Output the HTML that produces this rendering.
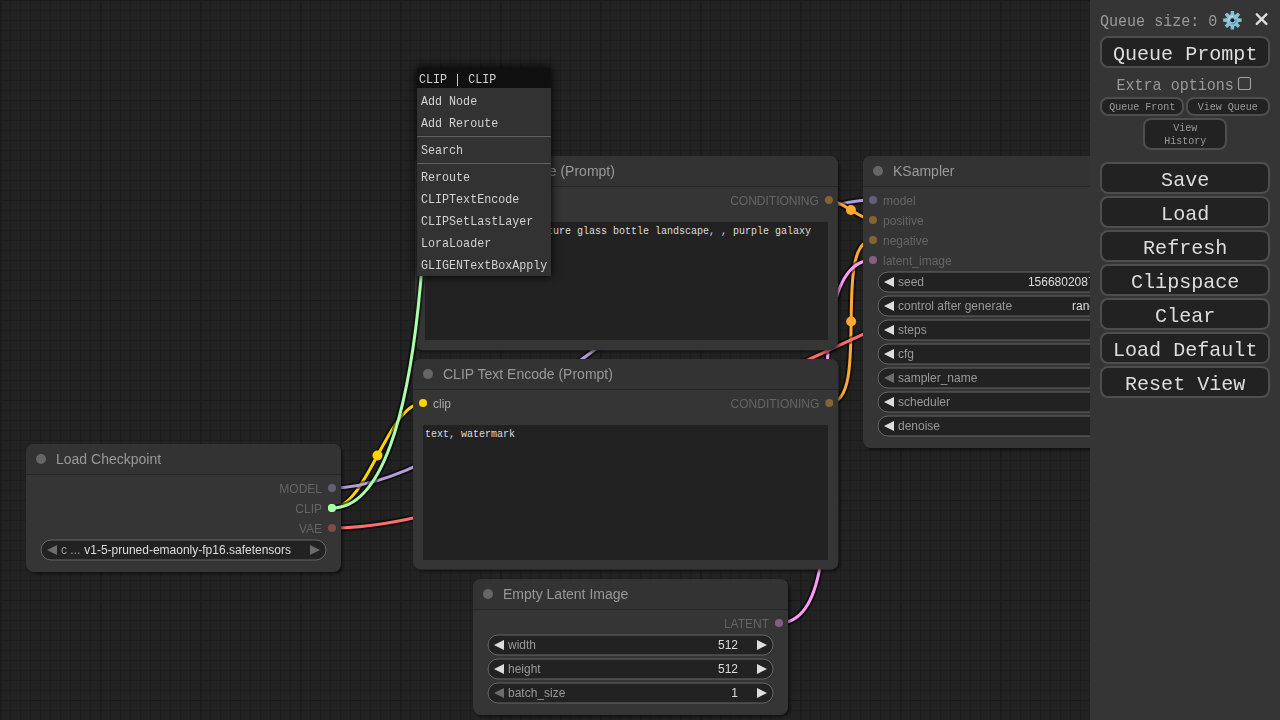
<!DOCTYPE html>
<html><head><meta charset="utf-8"><style>
html,body{margin:0;padding:0;width:1280px;height:720px;overflow:hidden;background:#222;}
#c{position:absolute;left:0;top:0;}
.ta{position:absolute;background:#222;color:#ddd;font-family:"Liberation Mono",monospace;font-size:10px;line-height:12px;padding:0;box-sizing:border-box;padding:4px 2px 2px 2px;white-space:pre;overflow:hidden}
#o{position:absolute;left:0;top:0;}
</style></head><body>

<svg id="c" style="will-change:transform" width="1280" height="720" viewBox="0 0 1280 720">
<defs>
<pattern id="grid" x="0" y="0" width="100" height="100" patternUnits="userSpaceOnUse">
<rect width="100" height="100" fill="#222222"/>
<path d="M10 0V100M20 0V100M30 0V100M40 0V100M50 0V100M60 0V100M70 0V100M80 0V100M90 0V100M0 10H100M0 20H100M0 30H100M0 40H100M0 50H100M0 60H100M0 70H100M0 80H100M0 90H100" stroke="#1d1d1d" stroke-width="1" transform="translate(0.5 0.5)"/>
<rect x="0" y="0" width="100" height="1" fill="#1a1a1a"/>
<rect x="0" y="0" width="2" height="100" fill="#1b1b1b"/>
</pattern>
<filter id="sh" x="-10%" y="-10%" width="120%" height="120%"><feDropShadow dx="2" dy="2" stdDeviation="1.5" flood-color="#000" flood-opacity="0.5"/></filter>
<filter id="msh" x="-30%" y="-30%" width="160%" height="160%"><feDropShadow dx="0" dy="0" stdDeviation="5" flood-color="#000" flood-opacity="1"/></filter>
</defs>
<rect width="1280" height="720" fill="url(#grid)"/>
<path d="M332 508C366.74 508 388.26 403 423 403" fill="none" stroke="rgba(0,0,0,0.5)" stroke-width="7"/><path d="M332 508C366.74 508 388.26 403 423 403" fill="none" stroke="#FFD500" stroke-width="3"/><circle cx="377.5" cy="455.5" r="5" fill="#FFD500"/>
<path d="M332 488C485.22 488 719.78 200 873 200" fill="none" stroke="rgba(0,0,0,0.5)" stroke-width="7"/><path d="M332 488C485.22 488 719.78 200 873 200" fill="none" stroke="#B39DDB" stroke-width="3"/><circle cx="602.5" cy="344" r="5" fill="#B39DDB"/>
<path d="M828.85 200C840.97 200 860.88 220 873 220" fill="none" stroke="rgba(0,0,0,0.5)" stroke-width="7"/><path d="M828.85 200C840.97 200 860.88 220 873 220" fill="none" stroke="#FFA931" stroke-width="3"/><circle cx="850.92" cy="210" r="5" fill="#FFA931"/>
<path d="M829.28 403C871.47 403 830.81 240 873 240" fill="none" stroke="rgba(0,0,0,0.5)" stroke-width="7"/><path d="M829.28 403C871.47 403 830.81 240 873 240" fill="none" stroke="#FFA931" stroke-width="3"/><circle cx="851.14" cy="321.5" r="5" fill="#FFA931"/>
<path d="M779 623C872.74 623 779.26 260 873 260" fill="none" stroke="rgba(0,0,0,0.5)" stroke-width="7"/><path d="M779 623C872.74 623 779.26 260 873 260" fill="none" stroke="#FF9CF9" stroke-width="3"/><circle cx="826" cy="441.5" r="5" fill="#FF9CF9"/>
<path d="M332 528C566.57 528 984.43 222 1219 222" fill="none" stroke="rgba(0,0,0,0.5)" stroke-width="7"/><path d="M332 528C566.57 528 984.43 222 1219 222" fill="none" stroke="#FF6E6E" stroke-width="3"/><circle cx="775.5" cy="375" r="5" fill="#FF6E6E"/>
<path filter="url(#sh)" d="M34 444H333A8 8 0 0 1 341 452V564A8 8 0 0 1 333 572H34A8 8 0 0 1 26 564V452A8 8 0 0 1 34 444Z" fill="#353535"/>
<path d="M34 444H333A8 8 0 0 1 341 452V474H26V452A8 8 0 0 1 34 444Z" fill="#333333"/>
<rect x="26" y="474" width="315" height="1" fill="rgba(0,0,0,0.25)"/>
<circle cx="41" cy="459" r="5" fill="#666"/>
<text x="56" y="464" font-size="14" fill="#999" font-family="Liberation Sans, sans-serif">Load Checkpoint</text>
<g opacity="0.4"><circle cx="332" cy="488" r="4" fill="#B39DDB"/></g><text opacity="0.4" x="322" y="493" text-anchor="end" font-size="12" fill="#AAA" font-family="Liberation Sans, sans-serif">MODEL</text>
<g><circle cx="332" cy="508" r="4" fill="#AAFFAA"/></g><text opacity="0.4" x="322" y="513" text-anchor="end" font-size="12" fill="#AAA" font-family="Liberation Sans, sans-serif">CLIP</text>
<g opacity="0.4"><circle cx="332" cy="528" r="4" fill="#FF6E6E"/></g><text opacity="0.4" x="322" y="533" text-anchor="end" font-size="12" fill="#AAA" font-family="Liberation Sans, sans-serif">VAE</text>
<rect x="41" y="540" width="285" height="20" rx="10" ry="10" fill="#222" stroke="#666" stroke-width="1"/>
<path d="M57 545L47 550L57 555Z" fill="#DDD" fill-opacity="0.4"/>
<path d="M310 545L320 550L310 555Z" fill="#DDD" fill-opacity="0.4"/>
<text x="61" y="554" font-size="12" fill="#999" font-family="Liberation Sans, sans-serif">c ...</text>
<text x="291" y="554" text-anchor="end" font-size="12" fill="#DDD" font-family="Liberation Sans, sans-serif">v1-5-pruned-emaonly-fp16.safetensors</text>
<path filter="url(#sh)" d="M423 156H829.85A8 8 0 0 1 837.85 164V342.31A8 8 0 0 1 829.85 350.31H423A8 8 0 0 1 415 342.31V164A8 8 0 0 1 423 156Z" fill="#353535"/>
<path d="M423 156H829.85A8 8 0 0 1 837.85 164V186H415V164A8 8 0 0 1 423 156Z" fill="#333333"/>
<rect x="415" y="186" width="422.85" height="1" fill="rgba(0,0,0,0.25)"/>
<circle cx="430" cy="171" r="5" fill="#666"/>
<text x="445" y="176" font-size="14" fill="#999" font-family="Liberation Sans, sans-serif">CLIP Text Encode (Prompt)</text>
<g><circle cx="425" cy="200" r="4" fill="#FFD500"/><text x="435" y="205" font-size="12" fill="#AAA" font-family="Liberation Sans, sans-serif">clip</text></g>
<g opacity="0.4"><circle cx="828.85" cy="200" r="4" fill="#FFA931"/></g><text opacity="0.4" x="818.85" y="205" text-anchor="end" font-size="12" fill="#AAA" font-family="Liberation Sans, sans-serif">CONDITIONING</text>
<path filter="url(#sh)" d="M421 359H830.28A8 8 0 0 1 838.28 367V561.61A8 8 0 0 1 830.28 569.61H421A8 8 0 0 1 413 561.61V367A8 8 0 0 1 421 359Z" fill="#353535"/>
<path d="M421 359H830.28A8 8 0 0 1 838.28 367V389H413V367A8 8 0 0 1 421 359Z" fill="#333333"/>
<rect x="413" y="389" width="425.28" height="1" fill="rgba(0,0,0,0.25)"/>
<circle cx="428" cy="374" r="5" fill="#666"/>
<text x="443" y="379" font-size="14" fill="#999" font-family="Liberation Sans, sans-serif">CLIP Text Encode (Prompt)</text>
<g><circle cx="423" cy="403" r="4" fill="#FFD500"/><text x="433" y="408" font-size="12" fill="#AAA" font-family="Liberation Sans, sans-serif">clip</text></g>
<g opacity="0.4"><circle cx="829.28" cy="403" r="4" fill="#FFA931"/></g><text opacity="0.4" x="819.28" y="408" text-anchor="end" font-size="12" fill="#AAA" font-family="Liberation Sans, sans-serif">CONDITIONING</text>
<path filter="url(#sh)" d="M871 156H1170A8 8 0 0 1 1178 164V440A8 8 0 0 1 1170 448H871A8 8 0 0 1 863 440V164A8 8 0 0 1 871 156Z" fill="#353535"/>
<path d="M871 156H1170A8 8 0 0 1 1178 164V186H863V164A8 8 0 0 1 871 156Z" fill="#333333"/>
<rect x="863" y="186" width="315" height="1" fill="rgba(0,0,0,0.25)"/>
<circle cx="878" cy="171" r="5" fill="#666"/>
<text x="893" y="176" font-size="14" fill="#999" font-family="Liberation Sans, sans-serif">KSampler</text>
<g opacity="0.4"><circle cx="873" cy="200" r="4" fill="#B39DDB"/><text x="883" y="205" font-size="12" fill="#AAA" font-family="Liberation Sans, sans-serif">model</text></g>
<g opacity="0.4"><circle cx="873" cy="220" r="4" fill="#FFA931"/><text x="883" y="225" font-size="12" fill="#AAA" font-family="Liberation Sans, sans-serif">positive</text></g>
<g opacity="0.4"><circle cx="873" cy="240" r="4" fill="#FFA931"/><text x="883" y="245" font-size="12" fill="#AAA" font-family="Liberation Sans, sans-serif">negative</text></g>
<g opacity="0.4"><circle cx="873" cy="260" r="4" fill="#FF9CF9"/><text x="883" y="265" font-size="12" fill="#AAA" font-family="Liberation Sans, sans-serif">latent_image</text></g>
<g opacity="0.4"><circle cx="1169" cy="200" r="4" fill="#FF9CF9"/></g><text opacity="0.4" x="1159" y="205" text-anchor="end" font-size="12" fill="#AAA" font-family="Liberation Sans, sans-serif">LATENT</text>
<rect x="878" y="272" width="285" height="20" rx="10" ry="10" fill="#222" stroke="#666" stroke-width="1"/>
<path d="M894 277L884 282L894 287Z" fill="#DDD"/>
<path d="M1147 277L1157 282L1147 287Z" fill="#DDD"/>
<text x="898" y="286" font-size="12" fill="#999" font-family="Liberation Sans, sans-serif">seed</text>
<text x="1128" y="286" text-anchor="end" font-size="12" fill="#DDD" font-family="Liberation Sans, sans-serif">156680208700286</text>
<rect x="878" y="296" width="285" height="20" rx="10" ry="10" fill="#222" stroke="#666" stroke-width="1"/>
<path d="M894 301L884 306L894 311Z" fill="#DDD"/>
<path d="M1147 301L1157 306L1147 311Z" fill="#DDD"/>
<text x="898" y="310" font-size="12" fill="#999" font-family="Liberation Sans, sans-serif">control after generate</text>
<text x="1128" y="310" text-anchor="end" font-size="12" fill="#DDD" font-family="Liberation Sans, sans-serif">randomize</text>
<rect x="878" y="320" width="285" height="20" rx="10" ry="10" fill="#222" stroke="#666" stroke-width="1"/>
<path d="M894 325L884 330L894 335Z" fill="#DDD"/>
<path d="M1147 325L1157 330L1147 335Z" fill="#DDD"/>
<text x="898" y="334" font-size="12" fill="#999" font-family="Liberation Sans, sans-serif">steps</text>
<text x="1128" y="334" text-anchor="end" font-size="12" fill="#DDD" font-family="Liberation Sans, sans-serif">20</text>
<rect x="878" y="344" width="285" height="20" rx="10" ry="10" fill="#222" stroke="#666" stroke-width="1"/>
<path d="M894 349L884 354L894 359Z" fill="#DDD"/>
<path d="M1147 349L1157 354L1147 359Z" fill="#DDD"/>
<text x="898" y="358" font-size="12" fill="#999" font-family="Liberation Sans, sans-serif">cfg</text>
<text x="1128" y="358" text-anchor="end" font-size="12" fill="#DDD" font-family="Liberation Sans, sans-serif">8.0</text>
<rect x="878" y="368" width="285" height="20" rx="10" ry="10" fill="#222" stroke="#666" stroke-width="1"/>
<path d="M894 373L884 378L894 383Z" fill="#DDD" fill-opacity="0.4"/>
<path d="M1147 373L1157 378L1147 383Z" fill="#DDD"/>
<text x="898" y="382" font-size="12" fill="#999" font-family="Liberation Sans, sans-serif">sampler_name</text>
<text x="1128" y="382" text-anchor="end" font-size="12" fill="#DDD" font-family="Liberation Sans, sans-serif">euler</text>
<rect x="878" y="392" width="285" height="20" rx="10" ry="10" fill="#222" stroke="#666" stroke-width="1"/>
<path d="M894 397L884 402L894 407Z" fill="#DDD"/>
<path d="M1147 397L1157 402L1147 407Z" fill="#DDD"/>
<text x="898" y="406" font-size="12" fill="#999" font-family="Liberation Sans, sans-serif">scheduler</text>
<text x="1128" y="406" text-anchor="end" font-size="12" fill="#DDD" font-family="Liberation Sans, sans-serif">normal</text>
<rect x="878" y="416" width="285" height="20" rx="10" ry="10" fill="#222" stroke="#666" stroke-width="1"/>
<path d="M894 421L884 426L894 431Z" fill="#DDD"/>
<path d="M1147 421L1157 426L1147 431Z" fill="#DDD" fill-opacity="0.4"/>
<text x="898" y="430" font-size="12" fill="#999" font-family="Liberation Sans, sans-serif">denoise</text>
<text x="1128" y="430" text-anchor="end" font-size="12" fill="#DDD" font-family="Liberation Sans, sans-serif">1.00</text>
<path filter="url(#sh)" d="M481 579H780A8 8 0 0 1 788 587V707A8 8 0 0 1 780 715H481A8 8 0 0 1 473 707V587A8 8 0 0 1 481 579Z" fill="#353535"/>
<path d="M481 579H780A8 8 0 0 1 788 587V609H473V587A8 8 0 0 1 481 579Z" fill="#333333"/>
<rect x="473" y="609" width="315" height="1" fill="rgba(0,0,0,0.25)"/>
<circle cx="488" cy="594" r="5" fill="#666"/>
<text x="503" y="599" font-size="14" fill="#999" font-family="Liberation Sans, sans-serif">Empty Latent Image</text>
<g opacity="0.4"><circle cx="779" cy="623" r="4" fill="#FF9CF9"/></g><text opacity="0.4" x="769" y="628" text-anchor="end" font-size="12" fill="#AAA" font-family="Liberation Sans, sans-serif">LATENT</text>
<rect x="488" y="635" width="285" height="20" rx="10" ry="10" fill="#222" stroke="#666" stroke-width="1"/>
<path d="M504 640L494 645L504 650Z" fill="#DDD"/>
<path d="M757 640L767 645L757 650Z" fill="#DDD"/>
<text x="508" y="649" font-size="12" fill="#999" font-family="Liberation Sans, sans-serif">width</text>
<text x="738" y="649" text-anchor="end" font-size="12" fill="#DDD" font-family="Liberation Sans, sans-serif">512</text>
<rect x="488" y="659" width="285" height="20" rx="10" ry="10" fill="#222" stroke="#666" stroke-width="1"/>
<path d="M504 664L494 669L504 674Z" fill="#DDD"/>
<path d="M757 664L767 669L757 674Z" fill="#DDD"/>
<text x="508" y="673" font-size="12" fill="#999" font-family="Liberation Sans, sans-serif">height</text>
<text x="738" y="673" text-anchor="end" font-size="12" fill="#DDD" font-family="Liberation Sans, sans-serif">512</text>
<rect x="488" y="683" width="285" height="20" rx="10" ry="10" fill="#222" stroke="#666" stroke-width="1"/>
<path d="M504 688L494 693L504 698Z" fill="#DDD" fill-opacity="0.4"/>
<path d="M757 688L767 693L757 698Z" fill="#DDD"/>
<text x="508" y="697" font-size="12" fill="#999" font-family="Liberation Sans, sans-serif">batch_size</text>
<text x="738" y="697" text-anchor="end" font-size="12" fill="#DDD" font-family="Liberation Sans, sans-serif">1</text>
<path d="M332 508C435.27 508 427 106 427 106" fill="none" stroke="rgba(0,0,0,0.5)" stroke-width="7"/><path d="M332 508C435.27 508 427 106 427 106" fill="none" stroke="#AAFFAA" stroke-width="3"/>
<circle cx="332" cy="508" r="4" fill="#AAFFAA"/>
</svg>
<div class="ta" style="left:425px;top:222px;width:403px;height:118px">beautiful scenery nature glass bottle landscape, , purple galaxy<br>bottle,</div>
<div class="ta" style="left:423px;top:425px;width:405px;height:135px">text, watermark</div>
<svg id="o" style="will-change:transform" width="1280" height="720" viewBox="0 0 1280 720">
<defs><filter id="msh" x="-30%" y="-30%" width="160%" height="160%"><feDropShadow dx="0" dy="0" stdDeviation="5" flood-color="#000" flood-opacity="1"/></filter></defs>
<g filter="url(#msh)"><rect x="417" y="68" width="134" height="208" fill="#323232"/></g>
<rect x="417" y="68" width="134" height="20" fill="#101010"/>
<text x="419" y="83" font-size="12.59" textLength="77.21" lengthAdjust="spacingAndGlyphs" fill="#d2d2d4" font-family="Liberation Mono, monospace" xml:space="preserve">CLIP | CLIP</text>
<text x="421" y="105" font-size="12.59" textLength="56.15" lengthAdjust="spacingAndGlyphs" fill="#d2d2d2" font-family="Liberation Mono, monospace" xml:space="preserve">Add Node</text>
<text x="421" y="127" font-size="12.59" textLength="77.21" lengthAdjust="spacingAndGlyphs" fill="#d2d2d2" font-family="Liberation Mono, monospace" xml:space="preserve">Add Reroute</text>
<text x="421" y="154" font-size="12.59" textLength="42.12" lengthAdjust="spacingAndGlyphs" fill="#d2d2d2" font-family="Liberation Mono, monospace" xml:space="preserve">Search</text>
<text x="421" y="181" font-size="12.59" textLength="49.14" lengthAdjust="spacingAndGlyphs" fill="#d2d2d2" font-family="Liberation Mono, monospace" xml:space="preserve">Reroute</text>
<text x="421" y="203" font-size="12.59" textLength="98.27" lengthAdjust="spacingAndGlyphs" fill="#d2d2d2" font-family="Liberation Mono, monospace" xml:space="preserve">CLIPTextEncode</text>
<text x="421" y="225" font-size="12.59" textLength="112.31" lengthAdjust="spacingAndGlyphs" fill="#d2d2d2" font-family="Liberation Mono, monospace" xml:space="preserve">CLIPSetLastLayer</text>
<text x="421" y="247" font-size="12.59" textLength="70.19" lengthAdjust="spacingAndGlyphs" fill="#d2d2d2" font-family="Liberation Mono, monospace" xml:space="preserve">LoraLoader</text>
<text x="421" y="269" font-size="12.59" textLength="126.35" lengthAdjust="spacingAndGlyphs" fill="#d2d2d2" font-family="Liberation Mono, monospace" xml:space="preserve">GLIGENTextBoxApply</text>
<rect x="417" y="135" width="134" height="1" fill="#303030"/><rect x="417" y="136" width="134" height="1" fill="#616161"/>
<rect x="417" y="162" width="134" height="1" fill="#303030"/><rect x="417" y="163" width="134" height="1" fill="#616161"/>
<rect x="1090" y="0" width="190" height="720" fill="#353535"/>
<text x="1100" y="26" font-size="16.2" textLength="117.39" lengthAdjust="spacingAndGlyphs" fill="#999" font-family="Liberation Mono, monospace" xml:space="preserve">Queue size: 0</text>
<path d="M1230.54 14.18 L1230.76 10.94 L1234.04 10.94 L1234.26 14.18 L1235.34 14.63 L1237.79 12.5 L1240.1 14.81 L1237.97 17.26 L1238.42 18.34 L1241.66 18.56 L1241.66 21.84 L1238.42 22.06 L1237.97 23.14 L1240.1 25.59 L1237.79 27.9 L1235.34 25.77 L1234.26 26.22 L1234.04 29.46 L1230.76 29.46 L1230.54 26.22 L1229.46 25.77 L1227.01 27.9 L1224.7 25.59 L1226.83 23.14 L1226.38 22.06 L1223.14 21.84 L1223.14 18.56 L1226.38 18.34 L1226.83 17.26 L1224.7 14.81 L1227.01 12.5 L1229.46 14.63Z" fill="#88c0d4"/>
<path d="M1228.8 21.2A3.7 3.7 0 0 1 1233.4 16.6" fill="none" stroke="#b4dcea" stroke-width="1.3"/>
<path d="M1236 19.2A3.7 3.7 0 0 1 1231.4 23.8" fill="none" stroke="#4f9bb2" stroke-width="1.3"/>
<circle cx="1232.4" cy="20.2" r="2" fill="#1e1e1e"/>
<path d="M1256.8 14.3L1266.4 23.9M1266.4 14.3L1256.8 23.9" stroke="#ddd" stroke-width="2.4" stroke-linecap="round"/>
<rect x="1101" y="37" width="168" height="30" rx="7" ry="7" fill="#222" stroke="#4e4e4e" stroke-width="2"/>
<text x="1185.2" y="59.7" text-anchor="middle" font-size="20.6" textLength="144.48" lengthAdjust="spacingAndGlyphs" fill="#ddd" font-family="Liberation Mono, monospace" xml:space="preserve">Queue Prompt</text>
<text x="1175.2" y="90" text-anchor="middle" font-size="16.2" textLength="117.39" lengthAdjust="spacingAndGlyphs" fill="#999" font-family="Liberation Mono, monospace" xml:space="preserve">Extra options</text>
<rect x="1238.5" y="77.5" width="12" height="12" rx="2" fill="#393939" stroke="#a0a0a0" stroke-width="1.1"/>
<rect x="1101" y="98" width="82" height="17" rx="7" ry="7" fill="#222" stroke="#4e4e4e" stroke-width="2"/>
<rect x="1187" y="98" width="82" height="17" rx="7" ry="7" fill="#222" stroke="#4e4e4e" stroke-width="2"/>
<text x="1142.3" y="109.8" text-anchor="middle" font-size="10.8" textLength="66.22" lengthAdjust="spacingAndGlyphs" fill="#999" font-family="Liberation Mono, monospace" xml:space="preserve">Queue Front</text>
<text x="1227.8" y="109.8" text-anchor="middle" font-size="10.8" textLength="60.2" lengthAdjust="spacingAndGlyphs" fill="#999" font-family="Liberation Mono, monospace" xml:space="preserve">View Queue</text>
<rect x="1144" y="119" width="82" height="30" rx="7" ry="7" fill="#222" stroke="#4e4e4e" stroke-width="2"/>
<text x="1185.2" y="130.7" text-anchor="middle" font-size="10.8" textLength="24.08" lengthAdjust="spacingAndGlyphs" fill="#999" font-family="Liberation Mono, monospace" xml:space="preserve">View</text>
<text x="1185.2" y="143.7" text-anchor="middle" font-size="10.8" textLength="42.14" lengthAdjust="spacingAndGlyphs" fill="#999" font-family="Liberation Mono, monospace" xml:space="preserve">History</text>
<rect x="1101" y="163" width="168" height="30" rx="7" ry="7" fill="#222" stroke="#4e4e4e" stroke-width="2"/>
<text x="1185.2" y="185.8" text-anchor="middle" font-size="20.6" textLength="48.16" lengthAdjust="spacingAndGlyphs" fill="#ddd" font-family="Liberation Mono, monospace" xml:space="preserve">Save</text>
<rect x="1101" y="197" width="168" height="30" rx="7" ry="7" fill="#222" stroke="#4e4e4e" stroke-width="2"/>
<text x="1185.2" y="219.8" text-anchor="middle" font-size="20.6" textLength="48.16" lengthAdjust="spacingAndGlyphs" fill="#ddd" font-family="Liberation Mono, monospace" xml:space="preserve">Load</text>
<rect x="1101" y="231" width="168" height="30" rx="7" ry="7" fill="#222" stroke="#4e4e4e" stroke-width="2"/>
<text x="1185.2" y="253.8" text-anchor="middle" font-size="20.6" textLength="84.28" lengthAdjust="spacingAndGlyphs" fill="#ddd" font-family="Liberation Mono, monospace" xml:space="preserve">Refresh</text>
<rect x="1101" y="265" width="168" height="30" rx="7" ry="7" fill="#222" stroke="#4e4e4e" stroke-width="2"/>
<text x="1185.2" y="287.8" text-anchor="middle" font-size="20.6" textLength="108.36" lengthAdjust="spacingAndGlyphs" fill="#ddd" font-family="Liberation Mono, monospace" xml:space="preserve">Clipspace</text>
<rect x="1101" y="299" width="168" height="30" rx="7" ry="7" fill="#222" stroke="#4e4e4e" stroke-width="2"/>
<text x="1185.2" y="321.8" text-anchor="middle" font-size="20.6" textLength="60.2" lengthAdjust="spacingAndGlyphs" fill="#ddd" font-family="Liberation Mono, monospace" xml:space="preserve">Clear</text>
<rect x="1101" y="333" width="168" height="30" rx="7" ry="7" fill="#222" stroke="#4e4e4e" stroke-width="2"/>
<text x="1185.2" y="355.8" text-anchor="middle" font-size="20.6" textLength="144.48" lengthAdjust="spacingAndGlyphs" fill="#ddd" font-family="Liberation Mono, monospace" xml:space="preserve">Load Default</text>
<rect x="1101" y="367" width="168" height="30" rx="7" ry="7" fill="#222" stroke="#4e4e4e" stroke-width="2"/>
<text x="1185.2" y="389.8" text-anchor="middle" font-size="20.6" textLength="120.4" lengthAdjust="spacingAndGlyphs" fill="#ddd" font-family="Liberation Mono, monospace" xml:space="preserve">Reset View</text>
</svg>
</body></html>
